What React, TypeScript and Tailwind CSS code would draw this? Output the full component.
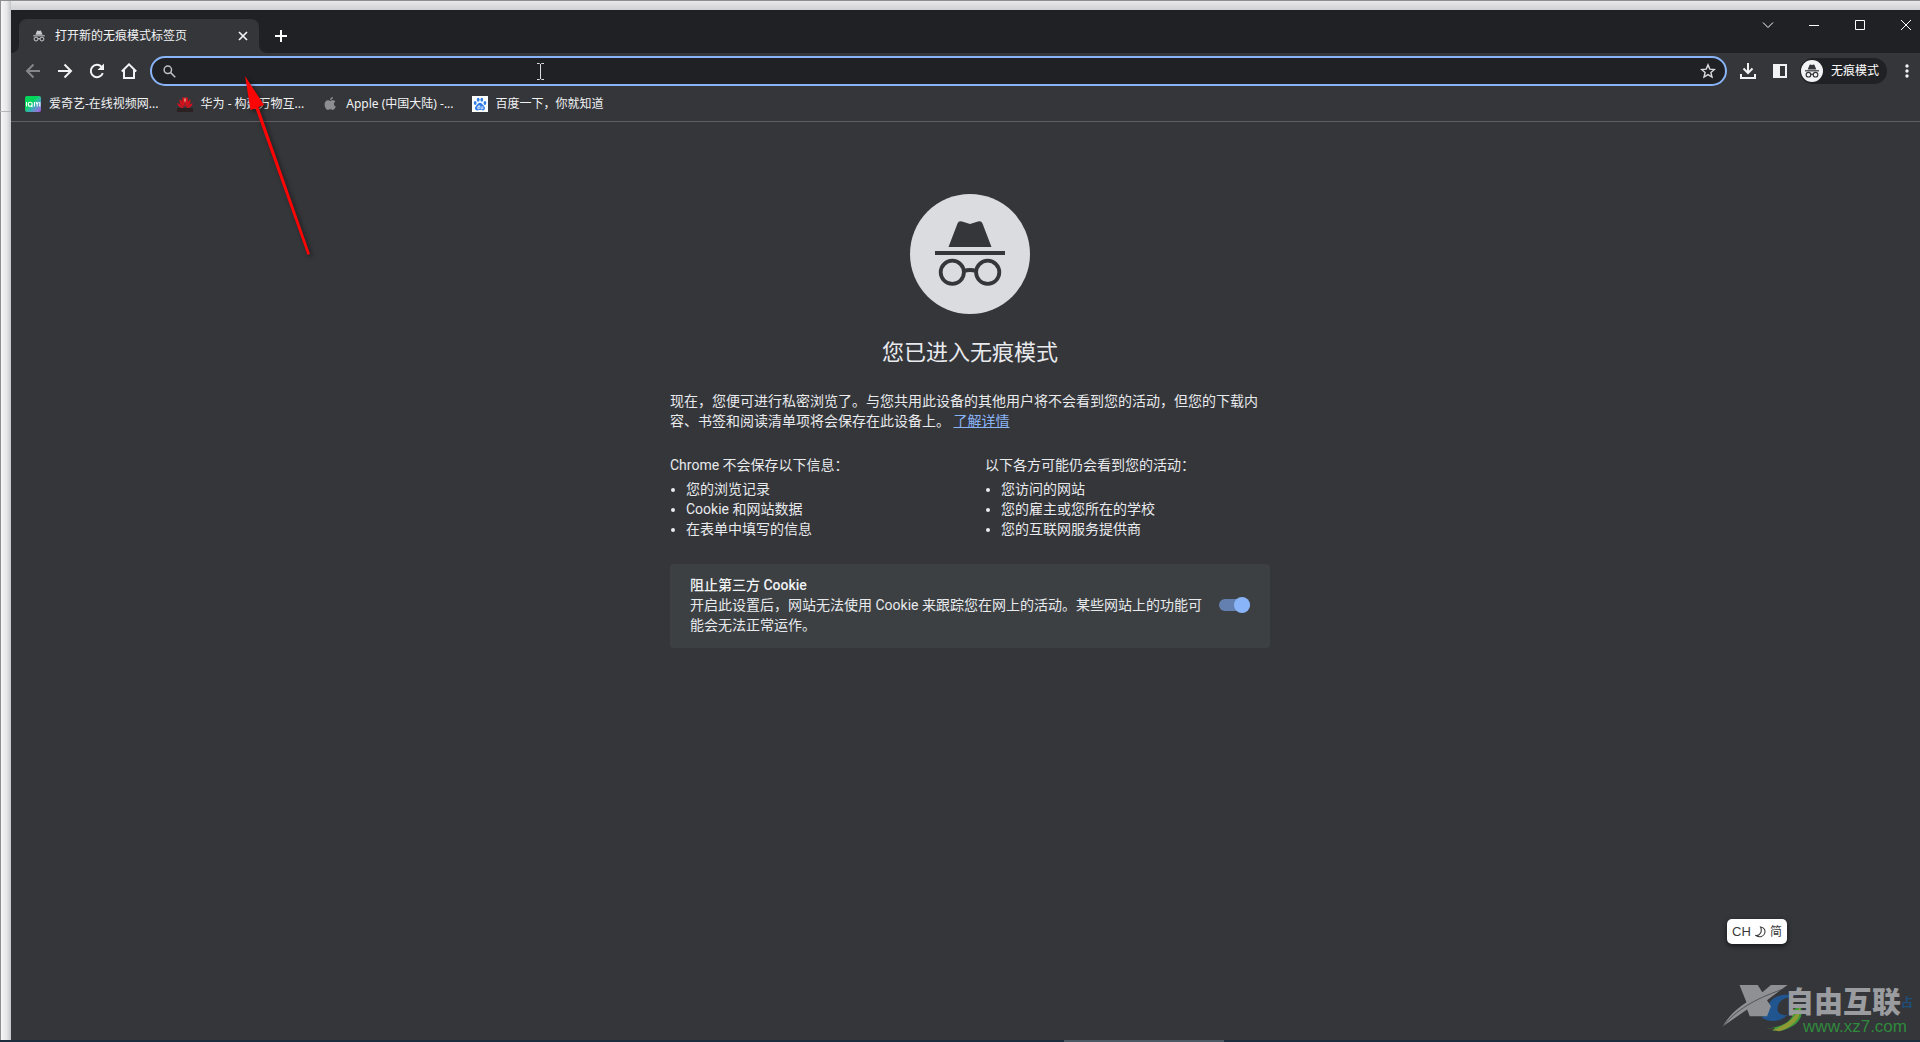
import { useState } from 'react';
import type { ReactNode } from 'react';

const SAVED_NOT = ['您的浏览记录', 'Cookie 和网站数据', '在表单中填写的信息'];
const STILL_VISIBLE = ['您访问的网站', '您的雇主或您所在的学校', '您的互联网服务提供商'];

// Hat and glasses, drawn on a 120 unit canvas
function IncognitoGlyph({ bold = false }: { bold?: boolean }) {
  return (
    <>
      <path d="M38.5 53 47.5 29.5Q48.6 26.4 52 27.4L60 30 68 27.4Q71.4 26.4 72.5 29.5L81.5 53Z" fill="currentColor" />
      <path d={bold ? 'M25 56h70v6H25z' : 'M25 57h70v4H25z'} fill="currentColor" />
      <g fill="none" stroke="currentColor" strokeWidth={bold ? 6 : 3.8}>
        <circle cx="42.3" cy="78.3" r="11.6" />
        <circle cx="77.7" cy="78.3" r="11.6" />
        <path d="M53.5 77.2Q60 74.8 66.5 77.2" />
      </g>
    </>
  );
}

function ToolButton({ label, dim = false, children }: { label: string; dim?: boolean; children: ReactNode }) {
  return (
    <button
      type="button"
      aria-label={label}
      className={`flex size-7 shrink-0 items-center justify-center rounded-full ${
        dim ? 'text-[#85868a]' : 'text-[#f1f3f4] hover:bg-white/10'
      }`}
    >
      {children}
    </button>
  );
}

function WindowButton({ label, d }: { label: string; d: string }) {
  return (
    <button type="button" aria-label={label} className="flex h-[30px] w-[46px] items-center justify-center text-white hover:bg-white/10">
      <svg viewBox="0 0 12 12" className="size-3" fill="none" stroke="currentColor">
        <path d={d} />
      </svg>
    </button>
  );
}

function Bookmark({ icon, children }: { icon: ReactNode; children: ReactNode }) {
  return (
    <a href="#" className="flex items-center gap-2 whitespace-nowrap text-[12px] leading-4 text-[#f1f3f4]">
      {icon}
      <span>{children}</span>
    </a>
  );
}

function TitleBar() {
  return (
    <div className="flex h-[43px] items-start justify-between bg-[#202124]">
      <div className="flex h-full items-end pl-2">
        <div className="relative flex h-[34px] w-60 items-center gap-2 rounded-t-lg bg-[#35363a] pr-2 pl-3">
          <svg viewBox="0 0 8 8" className="absolute bottom-0 -left-2 size-2 text-[#35363a]">
            <path d="M8 0v8H0a8 8 0 0 0 8-8Z" fill="currentColor" />
          </svg>
          <svg viewBox="0 0 8 8" className="absolute -right-2 bottom-0 size-2 text-[#35363a]">
            <path d="M0 0v8h8a8 8 0 0 1-8-8Z" fill="currentColor" />
          </svg>
          <svg viewBox="12 12 96 96" className="size-4 text-[#c8cacd]">
            <IncognitoGlyph bold />
          </svg>
          <span className="flex-1 text-[12px] leading-4 text-[#f1f3f4]">打开新的无痕模式标签页</span>
          <button type="button" aria-label="关闭标签页" className="flex size-4 items-center justify-center text-[#f1f3f4]">
            <svg viewBox="0 0 10 10" className="size-[10px]" stroke="currentColor" strokeWidth="1.7">
              <path d="M1 1l8 8M9 1l-8 8" />
            </svg>
          </button>
        </div>
        <button type="button" aria-label="打开新的标签页" className="mb-[3px] ml-2 flex size-7 items-center justify-center text-white">
          <svg viewBox="0 0 12 12" className="size-3" stroke="currentColor" strokeWidth="2">
            <path d="M6 0v12M0 6h12" />
          </svg>
        </button>
      </div>
      <div className="flex">
        <WindowButton label="搜索标签页" d="M1 3.5l5 5 5-5" />
        <WindowButton label="最小化" d="M1 6.5h10" />
        <WindowButton label="最大化" d="M1.5 1.5h9v9h-9z" />
        <WindowButton label="关闭" d="M1 1l10 10M11 1L1 11" />
      </div>
    </div>
  );
}

function Toolbar() {
  return (
    <div className="flex h-9 items-center px-2">
      <div className="flex gap-1">
        <ToolButton label="后退" dim>
          <svg viewBox="0 0 16 16" className="size-4" fill="none" stroke="currentColor" strokeWidth="2">
            <path d="M15 8H2.5M8.5 1.5L2 8l6.5 6.5" />
          </svg>
        </ToolButton>
        <ToolButton label="前进">
          <svg viewBox="0 0 16 16" className="size-4" fill="none" stroke="currentColor" strokeWidth="2">
            <path d="M1 8h12.500M7.500 1.500L14 8l-6.500 6.500" />
          </svg>
        </ToolButton>
        <ToolButton label="重新加载">
          <svg viewBox="0 0 16 16" className="size-4" fill="none" stroke="currentColor" strokeWidth="2">
            <path d="M13.800 10.200A6.200 6.200 0 1 1 12.600 3.800L14 5.200" />
            <path d="M15 .5V7H8.500z" fill="currentColor" stroke="none" />
          </svg>
        </ToolButton>
        <ToolButton label="主页">
          <svg viewBox="0 0 16 16" className="size-4" fill="none" stroke="currentColor" strokeWidth="2">
            <path d="M.8 8.500 8 1.400l7.200 7.100M3 7v8h10V7" />
          </svg>
        </ToolButton>
      </div>

      <div className="mx-[7px] flex h-[30px] flex-1 items-center rounded-full border-2 border-[#8ab4f8] bg-[#202124] pr-[9px] pl-[11px]">
        <svg viewBox="0 0 14 14" className="size-[13px] text-[#bdc1c6]" fill="none" stroke="currentColor" strokeWidth="1.6">
          <circle cx="5.200" cy="5.200" r="4" />
          <path d="M8.200 8.200l5 5" />
        </svg>
        <input
          type="text"
          aria-label="地址和搜索栏"
          className="mx-2 h-6 min-w-0 flex-1 bg-transparent text-[14px] text-white outline-none"
        />
        <button type="button" aria-label="为此标签页添加书签" className="text-[#dadce0]">
          <svg viewBox="0 0 16 16" className="size-4" fill="none" stroke="currentColor" strokeWidth="1.400">
            <path d="M8 1.900l1.800 4.200 4.600.4-3.500 3 1.100 4.500L8 11.600 4 14l1.100-4.500-3.500-3 4.600-.4z" />
          </svg>
        </button>
      </div>

      <div className="flex items-center gap-1">
        <ToolButton label="下载内容">
          <svg viewBox="0 0 16 16" className="size-4" fill="none" stroke="currentColor" strokeWidth="2">
            <path d="M8 0v9.500M3.500 5.500L8 10l4.500-4.500M1 11v4h14v-4" />
          </svg>
        </ToolButton>
        <ToolButton label="侧边栏">
          <svg viewBox="0 0 14 14" className="size-[14px]">
            <path d="M0 0h14v14H0zM7 2v10h5V2z" fill="currentColor" fillRule="evenodd" />
          </svg>
        </ToolButton>
        <button
          type="button"
          className="mx-0.5 flex h-[26px] items-center gap-2 rounded-full bg-[#202124] pr-2 pl-px text-[12px] leading-4 text-white"
        >
          <svg viewBox="5 5 110 110" className="size-[22px]">
            <circle cx="60" cy="60" r="55" fill="#f1f3f4" />
            <g className="text-[#35363a]">
              <IncognitoGlyph bold />
            </g>
          </svg>
          无痕模式
        </button>
        <ToolButton label="更多">
          <svg viewBox="0 0 4 14" className="h-[14px] w-1" fill="currentColor">
            <circle cx="2" cy="2" r="1.700" />
            <circle cx="2" cy="7" r="1.700" />
            <circle cx="2" cy="12" r="1.700" />
          </svg>
        </ToolButton>
      </div>
    </div>
  );
}

function BookmarksBar() {
  return (
    <nav className="flex h-[33px] items-center gap-[18px] border-b border-[#5f6063] px-[14px] pb-[3px]">
      <Bookmark
        icon={
          <span className="flex size-4 items-center justify-center overflow-hidden rounded-xs bg-linear-to-br from-[#00d65a] from-40% via-[#3fa4c0] via-65% to-[#a44be0]">
            <svg viewBox="0 0 16 16" className="size-4" fill="none" stroke="#fff" strokeWidth="1.100">
              <path d="M1.500 6v4.500M6.500 10l1 1M9.500 6v4.500M11 6l1.200 2.200L13.400 6M12.200 8v2.500M14.800 6v4.500" />
              <circle cx="5.200" cy="8.200" r="2" />
            </svg>
          </span>
        }
      >
        爱奇艺-在线视频网...
      </Bookmark>
      <Bookmark
        icon={
          <svg viewBox="0 0 16 16" className="size-4">
            <path d="M0 12h16v4H0z" fill="#2b2022" />
            <g fill="#d9101c">
              <path d="M7.600 11C5 8 4.400 4 5.600 1.200 7.400 1 8 2 7.800 4z" />
              <path d="M8.400 11c2.600-3 3.200-7 2-9.800C8.600 1 8 2 8.200 4z" />
              <path d="M7 11.500C3.800 9.500 2 6.500 2.600 3.200 4.500 4 6.400 8 7 11.500z" />
              <path d="M9 11.500c3.200-2 5-5 4.400-8.300C11.500 4 9.600 8 9 11.500z" />
              <path d="M6.600 12C3.500 12 .8 10.500.3 7 2.500 7.500 5 9.500 6.600 12z" />
              <path d="M9.400 12c3.100 0 5.800-1.500 6.300-5-2.200.5-4.700 2.500-6.300 5z" />
            </g>
            <path d="M8 1l1 3-1 3-1-3z" fill="#f08a70" />
          </svg>
        }
      >
        华为 - 构建万物互...
      </Bookmark>
      <Bookmark
        icon={
          <svg viewBox="0 0 16 16" className="size-4 text-[#8d8e91]" fill="currentColor">
            <path d="M10.900 1c.1 1.700-1.300 3.100-2.800 3C7.900 2.500 9.300 1.100 10.900 1zM8.200 4.900c.7 0 1.500-.7 2.700-.7 1 0 1.900.5 2.500 1.300-2.100 1.300-1.800 4.200.4 5.100-.6 1.600-1.700 3.300-2.900 3.300-.9 0-1.300-.6-2.500-.6s-1.600.6-2.500.6C4.200 13.900 2.600 11 2.600 8.500c0-2.600 1.600-4.200 3.300-4.200 1 0 1.700.6 2.300.6z" />
          </svg>
        }
      >
        Apple (中国大陆) -...
      </Bookmark>
      <Bookmark
        icon={
          <svg viewBox="0 0 16 16" className="size-4">
            <path d="M0 0h16v16H0z" fill="#fff" />
            <g fill="#2f7de8">
              <ellipse cx="3.200" cy="7" rx="1.400" ry="1.900" />
              <ellipse cx="6.200" cy="3.700" rx="1.400" ry="2" />
              <ellipse cx="9.800" cy="3.700" rx="1.400" ry="2" />
              <ellipse cx="12.900" cy="7" rx="1.400" ry="1.900" />
              <path d="M8 6.800c1.800 0 2.400 1.800 3.800 2.900 1.700 1.500 1.500 4.600-.9 4.700-1.200 0-1.800-.3-2.900-.3s-1.700.3-2.900.3c-2.400-.1-2.600-3.200-.9-4.700C5.600 8.600 6.200 6.800 8 6.800z" />
            </g>
            <path d="M7.200 9v3.800H5.800v-2.200h1.400M9 10.300v2.500h1.800v-2.500" fill="none" stroke="#fff" strokeWidth=".8" />
          </svg>
        }
      >
        百度一下，你就知道
      </Bookmark>
    </nav>
  );
}

function InfoList({ title, items }: { title: string; items: string[] }) {
  return (
    <div className="flex-1">
      <p>{title}</p>
      <ul className="mt-1 list-disc pl-4">
        {items.map((item) => (
          <li key={item}>{item}</li>
        ))}
      </ul>
    </div>
  );
}

function IncognitoPage() {
  const [blockCookies, setBlockCookies] = useState(true);

  return (
    <main className="flex flex-1 flex-col items-center pt-[72px] text-[14px] leading-5 text-[#e8eaed]">
      <svg viewBox="0 0 120 120" className="size-[120px]">
        <circle cx="60" cy="60" r="60" fill="#dadce0" />
        <g className="text-[#35363a]">
          <IncognitoGlyph />
        </g>
      </svg>
      <h1 className="mt-[23px] text-[22px] leading-8 text-[#e8eaed]">您已进入无痕模式</h1>

      <div className="mt-[22px] w-[600px] max-w-full">
        <p>
          现在，您便可进行私密浏览了。与您共用此设备的其他用户将不会看到您的活动，但您的下载内容、书签和阅读清单项将会保存在此设备上。{' '}
          <a href="#" className="text-[#8ab4f8] underline">
            了解详情
          </a>
        </p>

        <div className="mt-6 flex gap-[30px]">
          <InfoList title="Chrome 不会保存以下信息：" items={SAVED_NOT} />
          <InfoList title="以下各方可能仍会看到您的活动：" items={STILL_VISIBLE} />
        </div>

        <div className="mt-[25px] flex items-center gap-4 rounded bg-[#3c4043] px-5 pt-[11px] pb-[13px]">
          <label htmlFor="block-cookies" className="flex-1">
            <span className="block font-medium text-[#f1f3f4]">阻止第三方 Cookie</span>
            <span>开启此设置后，网站无法使用 Cookie 来跟踪您在网上的活动。某些网站上的功能可能会无法正常运作。</span>
          </label>
          <input
            id="block-cookies"
            type="checkbox"
            role="switch"
            checked={blockCookies}
            onChange={(e) => setBlockCookies(e.target.checked)}
            className="flex h-3 w-[31px] shrink-0 appearance-none items-center rounded-full bg-[#9aa0a6] before:size-4 before:rounded-full before:bg-[#dadce0] checked:justify-end checked:bg-[#6480b0] checked:before:bg-[#8ab4f8]"
          />
        </div>
      </div>
    </main>
  );
}

function PointerArrow() {
  return (
    <svg
      viewBox="0 0 80 190"
      className="pointer-events-none absolute top-[71px] left-[236px] h-[190px] w-20 drop-shadow-[2px_2px_2px_rgba(0,0,0,0.5)]"
    >
      <path d="M9 4 28 33 22.500 35 74 182 71.500 183 19.500 36.500 14.500 38Z" fill="#fb0505" />
    </svg>
  );
}

function Watermark() {
  return (
    <div className="pointer-events-none absolute right-0 bottom-[6px] w-[200px]">
      <svg viewBox="60 250 600 160" className="absolute bottom-0 left-0 h-[53px] w-[200px]">
        <path d="M182 352C208 352 198 326 210 306 224 286 250 282 292 288 256 292 236 302 232 322 229 342 244 350 262 346 242 368 204 372 182 352Z" fill="#20558f" />
        <path d="M194 388C246 384 282 364 280 330L300 318C316 350 292 384 236 396L244 386 216 396 224 386Z" fill="#3f9a3c" />
        <path d="M236 396C284 380 304 352 300 318 290 352 262 376 216 392Z" fill="#8f9a35" />
        <path d="M117 256H172L186 278 212 256H262L200 302 212 320 200 350H148L140 330 66 381C84 350 106 330 138 308Z" fill="#8e9093" />
        <path d="M66 381C110 330 160 300 244 270" fill="none" stroke="#45464a" strokeWidth="2.500" />
      </svg>
      <div className="relative flex flex-col items-end pr-[7px]">
        <div className="flex items-center leading-[30px]">
          <span className="text-[29px] font-black text-[#9a9c9f]">自由互联</span>
          <span aria-hidden="true" className="text-[12px] font-bold text-[#1d4f7c]">
            占
          </span>
        </div>
        <span className="pr-1.5 font-['Liberation_Sans',Arial,sans-serif] text-[17px] leading-[18px] text-[#2f8a3c]">www.xz7.com</span>
      </div>
    </div>
  );
}

export default function App() {
  return (
    <div
      lang="zh-CN"
      className="relative flex min-h-screen flex-col overflow-hidden border-t border-[#8e8e90] bg-linear-to-b from-[#e8e8ea] via-[#d0d1d4] via-[9px] to-[#e4e4e6] to-[60px] font-[Roboto,'Noto_Sans_CJK_SC',sans-serif]"
    >
      {/* Edge of the window lying behind */}
      <div className="absolute top-0 bottom-0 left-0 w-[11px] border-l border-[#8e8e90] bg-linear-to-r from-[#f6f6f7] via-[#e6e6e8] via-60% to-[#c4c5c8]" />
      <div className="absolute top-[110px] left-0 h-px w-[11px] bg-[#b4b5b8]" />

      <div className="relative mt-[9px] -mr-[9px] ml-[11px] flex flex-1 flex-col bg-[#35363a]">
        <header className="font-['Noto_Sans','Noto_Sans_CJK_SC',sans-serif]">
          <TitleBar />
          <Toolbar />
          <BookmarksBar />
        </header>
        <IncognitoPage />
      </div>

      {/* Top edge of the task bar */}
      <div className="relative flex h-0.5 justify-center bg-[#1c2d3d]">
        <div className="ml-[368px] w-40 bg-[#4b5a64]" />
      </div>

      <PointerArrow />

      <svg viewBox="0 0 7 17" className="pointer-events-none absolute top-[62px] left-[537px] h-[17px] w-[7px]" fill="none" stroke="#dadce0">
        <path d="M0 .5h2.500l1 1 1-1H7M3.500 1v15M0 16.500h2.500l1-1 1 1H7" />
      </svg>

      <div className="absolute right-[133px] bottom-[98px] flex h-[25px] w-[60px] items-center justify-center gap-1 rounded-[5px] bg-white text-[12px] leading-4 text-[#3a3a3c] shadow-[0_2px_5px_rgba(0,0,0,0.6)]">
        <span className="font-['Liberation_Sans',Arial,sans-serif] text-[13px]">CH</span>
        <svg viewBox="0 0 11 12" className="h-3 w-[11px]" fill="none" stroke="currentColor" strokeWidth="1.100">
          <path d="M5.500 1C9 1.500 10.500 4 9.800 7 9 10.500 4.500 12 1 9.500 4.500 9.800 7.800 6 5.500 1Z" />
        </svg>
        <span>简</span>
      </div>

      <Watermark />
    </div>
  );
}
